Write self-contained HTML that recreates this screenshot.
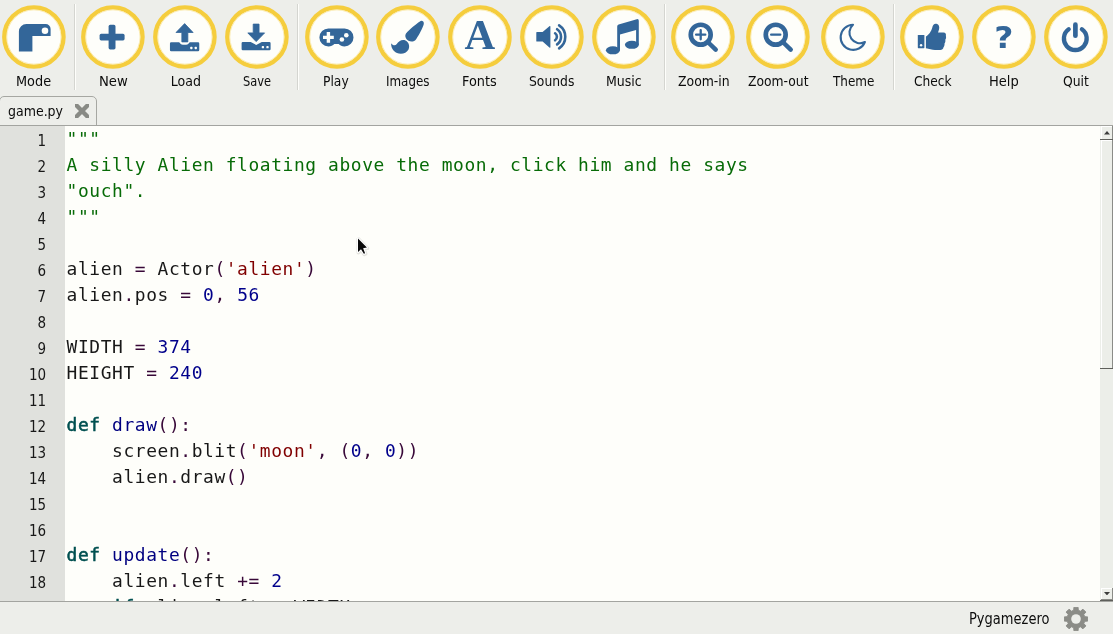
<!DOCTYPE html>
<html><head><meta charset="utf-8"><title>Mu</title>
<style>
html,body{margin:0;padding:0;}
body{width:1113px;height:634px;overflow:hidden;background:#edeeea;position:relative;font-family:"DejaVu Sans Condensed","DejaVu Sans","Liberation Sans",sans-serif;color:#0c0c0c;}
.ic{position:absolute;top:4.8px;width:64px;height:64px;overflow:visible;}
.l{position:absolute;top:72.4px;font-size:14px;line-height:18px;white-space:nowrap;transform-origin:0 0;}
.sep{position:absolute;top:4px;width:1px;height:86px;background:#d4d5d0;border-right:1px solid #fefefb;}
#w{position:absolute;left:0;top:0;width:1113px;height:634px;overflow:hidden;will-change:transform;}
#tab{position:absolute;left:-1px;top:96px;width:96px;height:32px;border:1px solid #a6a7a2;border-radius:5px 5px 0 0;background:#edeeea;}
#tabt{position:absolute;left:9.2px;top:102px;font-size:14px;line-height:18px;white-space:nowrap;transform-origin:0 0;}
#tabline{position:absolute;left:0;top:125px;width:1113px;height:1px;background:#a3a4a0;}
#ed{position:absolute;left:0;top:126px;width:1100px;height:475px;background:#fefefa;overflow:hidden;}
#mg{position:absolute;left:0;top:0;width:65px;height:475px;background:#e0e1dd;}
.ln{position:absolute;left:0;width:46.2px;text-align:right;font-size:15px;line-height:26px;height:26px;color:#181818;}
pre{position:absolute;left:66.6px;top:0;margin:0;font-family:"DejaVu Sans Mono","Liberation Mono",monospace;font-size:17.9px;letter-spacing:0.596px;line-height:26px;color:#181818;}
.k{color:#005050;-webkit-text-stroke:0.55px #005050;} .f{color:#000080;} .n{color:#00008b;} .s{color:#800000;} .d{color:#076b07;} .o{color:#380838;}
#sb{position:absolute;left:1100px;top:126px;width:13px;height:475px;background:#eceee9;}
#st{position:absolute;left:0;top:601px;width:1113px;height:33px;background:#edeeea;border-top:1px solid #a3a4a0;box-sizing:border-box;}
#stt{position:absolute;left:970px;top:609.6px;font-size:15px;line-height:18px;white-space:nowrap;transform-origin:0 0;}
</style></head><body><div id="w">
<div class="sep" style="left:74px"></div>
<div class="sep" style="left:297px"></div>
<div class="sep" style="left:664px"></div>
<div class="sep" style="left:893px"></div>
<svg class="ic" style="left:2.3px" viewBox="0 0 64 64"><circle cx="31.9" cy="32" r="29.65" fill="#fefefa" stroke="#f5cd3d" stroke-width="4.3"/><circle cx="31.9" cy="32" r="27.1" fill="none" stroke="#f9e38f" stroke-width="0.9" opacity="0.7"/><path d="M16.9 46.5V26.5a7.5 7.5 0 0 1 7.5-7.5H43.6a5 5 0 0 1 5 5V31H30.4V46.5Z" fill="#336699"/><circle cx="43" cy="25.8" r="3.3" fill="#fefefa"/></svg>
<span class="l" id="l-Mode" style="left:16.44px;transform:scaleX(1.0222)">Mode</span>
<svg class="ic" style="left:81.45px" viewBox="0 0 64 64"><circle cx="31.9" cy="32" r="29.65" fill="#fefefa" stroke="#f5cd3d" stroke-width="4.3"/><circle cx="31.9" cy="32" r="27.1" fill="none" stroke="#f9e38f" stroke-width="0.9" opacity="0.7"/><rect x="18.6" y="28.8" width="25" height="6.6" rx="1.6" fill="#336699"/><rect x="27.6" y="19.8" width="6.9" height="24.6" rx="1.6" fill="#336699"/></svg>
<span class="l" id="l-New" style="left:98.84px;transform:scaleX(1.0472)">New</span>
<svg class="ic" style="left:153.45px" viewBox="0 0 64 64"><circle cx="31.9" cy="32" r="29.65" fill="#fefefa" stroke="#f5cd3d" stroke-width="4.3"/><circle cx="31.9" cy="32" r="27.1" fill="none" stroke="#f9e38f" stroke-width="0.9" opacity="0.7"/><path d="M31.65 18.6L40.1 27.5H34.85V36.9H28.85V27.5H23Z" fill="#336699" stroke="#336699" stroke-width="0.8" stroke-linejoin="round"/><path d="M18.15 37.3H26.15L28 39.2Q31.45 40.4 34.9 39.2L36.75 37.3H45.05a1.2 1.2 0 0 1 1.2 1.2V45a1.2 1.2 0 0 1-1.2 1.2H18.15a1.2 1.2 0 0 1-1.2-1.2V38.5a1.2 1.2 0 0 1 1.2-1.2Z" fill="#336699"/><rect x="37.2" y="41.85" width="2.3" height="2.3" rx="0.7" fill="#fefefa"/><rect x="41.6" y="41.85" width="2.3" height="2.3" rx="0.7" fill="#fefefa"/></svg>
<span class="l" id="l-Load" style="left:170.75px;transform:scaleX(1)">Load</span>
<svg class="ic" style="left:225.45px" viewBox="0 0 64 64"><circle cx="31.9" cy="32" r="29.65" fill="#fefefa" stroke="#f5cd3d" stroke-width="4.3"/><circle cx="31.9" cy="32" r="27.1" fill="none" stroke="#f9e38f" stroke-width="0.9" opacity="0.7"/><path d="M28.2 19.1H34.05V27.9H39.6L31.2 36.6L22.8 27.9H28.2Z" fill="#336699" stroke="#336699" stroke-width="0.8" stroke-linejoin="round"/><path d="M17.8 37H25.7L31.2 39.9L36.8 37H44.4a1.2 1.2 0 0 1 1.2 1.2V44a1.2 1.2 0 0 1-1.2 1.2H17.8a1.2 1.2 0 0 1-1.2-1.2V38.2a1.2 1.2 0 0 1 1.2-1.2Z" fill="#336699"/><rect x="36.75" y="41.05" width="2.3" height="2.3" rx="0.7" fill="#fefefa"/><rect x="41.35" y="41.05" width="2.3" height="2.3" rx="0.7" fill="#fefefa"/></svg>
<span class="l" id="l-Save" style="left:243.31px;transform:scaleX(0.9073)">Save</span>
<svg class="ic" style="left:304.95px" viewBox="0 0 64 64"><circle cx="31.9" cy="32" r="29.65" fill="#fefefa" stroke="#f5cd3d" stroke-width="4.3"/><circle cx="31.9" cy="32" r="27.1" fill="none" stroke="#f9e38f" stroke-width="0.9" opacity="0.7"/><path d="M23.4 23.4H39.5a9 9 0 0 1 0 18c-2.6 0-4.3-1-5.8-2.5H29.3c-1.5 1.5-3.2 2.5-5.9 2.5a9 9 0 0 1 0-18Z" fill="#336699"/><path d="M23.4 27v10.8M18 32.4h10.8" stroke="#fefefa" stroke-width="3.4" fill="none"/><circle cx="41.3" cy="30.2" r="2.3" fill="#fefefa"/><circle cx="36.9" cy="34.5" r="2.3" fill="#fefefa"/></svg>
<span class="l" id="l-Play" style="left:323.05px;transform:scaleX(0.9773)">Play</span>
<svg class="ic" style="left:376.15px" viewBox="0 0 64 64"><circle cx="31.9" cy="32" r="29.65" fill="#fefefa" stroke="#f5cd3d" stroke-width="4.3"/><circle cx="31.9" cy="32" r="27.1" fill="none" stroke="#f9e38f" stroke-width="0.9" opacity="0.7"/><path d="M43.9 16.4C45.5 15 48.2 16.2 47.8 19C47 22.5 43 30 40.3 34C38.5 36.8 35 37.2 32.5 35.8C29.5 34 28.5 31 30 28.6C33 24.5 40 19 43.9 16.4Z" fill="#336699"/><path d="M15.1 38.3C17 40.8 19.3 41 20.8 39C22.5 36.3 26 34 29.5 35.5C33 37.2 34 41.5 32.5 44.5C30.5 48.5 25 49.8 21 48C17 46.2 15 42.5 15.1 38.3Z" fill="#336699"/></svg>
<span class="l" id="l-Images" style="left:386.07px;transform:scaleX(0.9449)">Images</span>
<svg class="ic" style="left:448.15px" viewBox="0 0 64 64"><circle cx="31.9" cy="32" r="29.65" fill="#fefefa" stroke="#f5cd3d" stroke-width="4.3"/><circle cx="31.9" cy="32" r="27.1" fill="none" stroke="#f9e38f" stroke-width="0.9" opacity="0.7"/><text x="31.85" y="44.1" text-anchor="middle" font-family="'Liberation Serif',serif" font-weight="bold" font-size="42.5" fill="#336699">A</text></svg>
<span class="l" id="l-Fonts" style="left:462.13px;transform:scaleX(1.0221)">Fonts</span>
<svg class="ic" style="left:520.15px" viewBox="0 0 64 64"><circle cx="31.9" cy="32" r="29.65" fill="#fefefa" stroke="#f5cd3d" stroke-width="4.3"/><circle cx="31.9" cy="32" r="27.1" fill="none" stroke="#f9e38f" stroke-width="0.9" opacity="0.7"/><path d="M16.3 27.6a0.6 0.6 0 0 1 .6-.6H22.6L29.4 21.2a0.6 0.6 0 0 1 1 .45V42.15a0.6 0.6 0 0 1-1 .45L22.6 36.6H16.9a0.6 0.6 0 0 1-.6-.6Z" fill="#336699"/><g fill="none" stroke="#336699" stroke-width="2.6" stroke-linecap="round"><path d="M35.1 28.3a4.3 4.3 0 0 1 0 7"/><path d="M37.1 24.2a9.3 9.3 0 0 1 0 15.2"/><path d="M39.1 20.3a13.8 13.8 0 0 1 0 23"/></g></svg>
<span class="l" id="l-Sounds" style="left:529.34px;transform:scaleX(0.9813)">Sounds</span>
<svg class="ic" style="left:592.15px" viewBox="0 0 64 64"><circle cx="31.9" cy="32" r="29.65" fill="#fefefa" stroke="#f5cd3d" stroke-width="4.3"/><circle cx="31.9" cy="32" r="27.1" fill="none" stroke="#f9e38f" stroke-width="0.9" opacity="0.7"/><path d="M25.2 21.4a2 2 0 0 1 1.4-1.9L44.8 14.2a1.6 1.6 0 0 1 2 1.5V39.8H44.1V24.9L28 29.6V45.3H25.2Z" fill="#336699"/><ellipse cx="20.9" cy="45.3" rx="7" ry="4" fill="#336699"/><ellipse cx="39.9" cy="39.8" rx="7" ry="4" fill="#336699"/></svg>
<span class="l" id="l-Music" style="left:606.36px;transform:scaleX(0.9979)">Music</span>
<svg class="ic" style="left:671.45px" viewBox="0 0 64 64"><circle cx="31.9" cy="32" r="29.65" fill="#fefefa" stroke="#f5cd3d" stroke-width="4.3"/><circle cx="31.9" cy="32" r="27.1" fill="none" stroke="#f9e38f" stroke-width="0.9" opacity="0.7"/><circle cx="29.7" cy="29.7" r="9.95" fill="none" stroke="#336699" stroke-width="4.7"/><path d="M37.3 37.5L44.7 44.7" stroke="#336699" stroke-width="4.5" stroke-linecap="round"/><path d="M25.1 29.7H34.3M29.7 25.1V34.3" stroke="#336699" stroke-width="2.3" stroke-linecap="round"/></svg>
<span class="l" id="l-Zoom-in" style="left:677.66px;transform:scaleX(0.988)">Zoom-in</span>
<svg class="ic" style="left:746.15px" viewBox="0 0 64 64"><circle cx="31.9" cy="32" r="29.65" fill="#fefefa" stroke="#f5cd3d" stroke-width="4.3"/><circle cx="31.9" cy="32" r="27.1" fill="none" stroke="#f9e38f" stroke-width="0.9" opacity="0.7"/><circle cx="29.7" cy="29.7" r="9.95" fill="none" stroke="#336699" stroke-width="4.7"/><path d="M37.3 37.5L44.7 44.7" stroke="#336699" stroke-width="4.5" stroke-linecap="round"/><path d="M25.1 29.7H34.3" stroke="#336699" stroke-width="2.3" stroke-linecap="round"/></svg>
<span class="l" id="l-Zoom-out" style="left:748.49px;transform:scaleX(0.9804)">Zoom-out</span>
<svg class="ic" style="left:821.45px" viewBox="0 0 64 64"><circle cx="31.9" cy="32" r="29.65" fill="#fefefa" stroke="#f5cd3d" stroke-width="4.3"/><circle cx="31.9" cy="32" r="27.1" fill="none" stroke="#f9e38f" stroke-width="0.9" opacity="0.7"/><path d="M32 19.7A12.6 12.6 0 1 0 43.9 37.05A10.6 10.6 0 0 1 32 19.7Z" fill="none" stroke="#336699" stroke-width="2.1" stroke-linejoin="round"/></svg>
<span class="l" id="l-Theme" style="left:833.1px;transform:scaleX(0.9518)">Theme</span>
<svg class="ic" style="left:900.15px" viewBox="0 0 64 64"><circle cx="31.9" cy="32" r="29.65" fill="#fefefa" stroke="#f5cd3d" stroke-width="4.3"/><circle cx="31.9" cy="32" r="27.1" fill="none" stroke="#f9e38f" stroke-width="0.9" opacity="0.7"/><rect x="17.8" y="30" width="6.6" height="13.2" rx="0.6" fill="#336699"/><circle cx="21.1" cy="40.3" r="1.2" fill="#fefefa"/><path d="M25.9 31.4C28.5 30.5 31.5 26 32.3 22.5C32.8 19.5 34.5 18.3 36.5 18.8C39 19.5 39.6 21.5 39.1 24C38.8 25.5 38.3 26.5 38 27.6H43.5C45.5 27.6 46.3 29.2 45.9 31C46.3 32.5 46 33.8 45.3 34.8C45.6 36.2 45.3 37.5 44.5 38.5C44.7 40 44.3 41.3 43.5 42.2C43.2 44 42 44.9 40.3 44.9H35C32 44.9 29 43.6 25.9 43.2Z" fill="#336699"/></svg>
<span class="l" id="l-Check" style="left:913.87px;transform:scaleX(0.97)">Check</span>
<svg class="ic" style="left:972.15px" viewBox="0 0 64 64"><circle cx="31.9" cy="32" r="29.65" fill="#fefefa" stroke="#f5cd3d" stroke-width="4.3"/><circle cx="31.9" cy="32" r="27.1" fill="none" stroke="#f9e38f" stroke-width="0.9" opacity="0.7"/><text transform="translate(31.7 0) scale(1.1 1)" x="0" y="43.2" text-anchor="middle" font-family="'DejaVu Sans','Liberation Sans',sans-serif" font-weight="bold" font-size="30" fill="#336699">?</text></svg>
<span class="l" id="l-Help" style="left:989.07px;transform:scaleX(1.0349)">Help</span>
<svg class="ic" style="left:1044.3px" viewBox="0 0 64 64"><circle cx="31.9" cy="32" r="29.65" fill="#fefefa" stroke="#f5cd3d" stroke-width="4.3"/><circle cx="31.9" cy="32" r="27.1" fill="none" stroke="#f9e38f" stroke-width="0.9" opacity="0.7"/><path d="M24.7 24.3A11.4 11.4 0 1 0 37.9 24.3" fill="none" stroke="#336699" stroke-width="4.3" stroke-linecap="round"/><path d="M31.4 19.7V30.7" stroke="#336699" stroke-width="4.7" stroke-linecap="round"/></svg>
<span class="l" id="l-Quit" style="left:1062.52px;transform:scaleX(0.9824)">Quit</span>
<div id="tab"></div><span id="tabt" style="left:8.28px;transform:scaleX(0.997)">game.py</span>
<svg style="position:absolute;left:74.9px;top:103.9px;width:14px;height:14px" viewBox="0 0 14 14"><path d="M-2 -2L16 16M16 -2L-2 16" stroke="#888a85" stroke-width="4.4"/></svg>
<div id="tabline"></div>
<div id="ed"><div id="mg"></div>
<div class="ln" style="top:1.5px">1</div><div class="ln" style="top:27.5px">2</div><div class="ln" style="top:53.5px">3</div><div class="ln" style="top:79.5px">4</div><div class="ln" style="top:105.5px">5</div><div class="ln" style="top:131.5px">6</div><div class="ln" style="top:157.5px">7</div><div class="ln" style="top:183.5px">8</div><div class="ln" style="top:209.5px">9</div><div class="ln" style="top:235.5px">10</div><div class="ln" style="top:261.5px">11</div><div class="ln" style="top:287.5px">12</div><div class="ln" style="top:313.5px">13</div><div class="ln" style="top:339.5px">14</div><div class="ln" style="top:365.5px">15</div><div class="ln" style="top:391.5px">16</div><div class="ln" style="top:417.5px">17</div><div class="ln" style="top:443.5px">18</div><div class="ln" style="top:469.5px">19</div>
<pre><span class="d">"""</span>
<span class="d">A silly Alien floating above the moon, click him and he says</span>
<span class="d">"ouch".</span>
<span class="d">"""</span>

alien <span class="o">=</span> Actor<span class="o">(</span><span class="s">'alien'</span><span class="o">)</span>
alien<span class="o">.</span>pos <span class="o">=</span> <span class="n">0</span><span class="o">,</span> <span class="n">56</span>

WIDTH <span class="o">=</span> <span class="n">374</span>
HEIGHT <span class="o">=</span> <span class="n">240</span>

<span class="k">def</span> <span class="f">draw</span><span class="o">():</span>
    screen<span class="o">.</span>blit<span class="o">(</span><span class="s">'moon'</span><span class="o">,</span> <span class="o">(</span><span class="n">0</span><span class="o">,</span> <span class="n">0</span><span class="o">))</span>
    alien<span class="o">.</span>draw<span class="o">()</span>


<span class="k">def</span> <span class="f">update</span><span class="o">():</span>
    alien<span class="o">.</span>left <span class="o">+=</span> <span class="n">2</span>
    <span class="k">if</span> alien<span class="o">.</span>left <span class="o">&gt;</span> WIDTH<span class="o">:</span>
</pre>
<svg style="position:absolute;left:354px;top:108px;width:20px;height:24px;overflow:visible" viewBox="0 0 20 24"><path d="M4 4.4V17.9L7 15.2L9.85 19.7L11.1 19.2L9.1 14.2L12.9 13.6Z" fill="none" stroke="#c9c9c4" stroke-opacity="0.5" stroke-width="3.8" stroke-linejoin="round" transform="translate(0.4 0.6)"/><path d="M4 4.4V17.9L7 15.2L9.85 19.7L11.1 19.2L9.1 14.2L12.9 13.6Z" fill="#0a0a0a" stroke="#ffffff" stroke-width="2.2" stroke-linejoin="round" paint-order="stroke"/></svg>
</div>
<div id="sb">
<div style="position:absolute;left:0;top:0;width:12px;height:13px;border-left:1px solid #f4f5f1;border-top:0;box-shadow:inset 1px 1px 0 #ffffff;"></div>
<div style="position:absolute;left:12px;top:0;width:1px;height:243px;background:#8b8c88"></div>
<div style="position:absolute;left:0;top:13px;width:13px;height:1px;background:#5e5f5b"></div>
<div style="position:absolute;left:1px;top:14px;width:11px;height:228px;box-shadow:inset 1px 1px 0 #ffffff;"></div>
<div style="position:absolute;left:0;top:242px;width:13px;height:1px;background:#5e5f5b"></div>
<div style="position:absolute;left:1px;top:462px;width:11px;height:11px;box-shadow:inset 1px 1px 0 #ffffff;"></div>
<div style="position:absolute;left:1px;top:473px;width:12px;height:1px;background:#8b8c88"></div>
<div style="position:absolute;left:12px;top:462px;width:1px;height:13px;background:#8b8c88"></div>
<div style="position:absolute;left:0;top:474px;width:13px;height:1px;background:#5e5f5b"></div>
<svg style="position:absolute;left:4px;top:5.4px;width:6px;height:3.4px" viewBox="0 0 6 3.4"><path d="M0 3.4L3 0L6 3.4Z" fill="#3c3c3c"/></svg>
<svg style="position:absolute;left:4px;top:466px;width:6px;height:3.4px" viewBox="0 0 6 3.4"><path d="M0 0L3 3.4L6 0Z" fill="#3c3c3c"/></svg>
</div>
<div id="st"></div><span id="stt" style="left:968.98px;transform:scaleX(0.9661)">Pygamezero</span>
<svg style="position:absolute;left:1064px;top:607px;width:24px;height:24px" viewBox="0 0 24 24"><path d="M9.69 3.3L9.97 0.17L14.03 0.17L14.31 3.3L16.51 4.21L18.93 2.2L21.8 5.07L19.79 7.49L20.7 9.69L23.83 9.97L23.83 14.03L20.7 14.31L19.79 16.51L21.8 18.93L18.93 21.8L16.51 19.79L14.31 20.7L14.03 23.83L9.97 23.83L9.69 20.7L7.49 19.79L5.07 21.8L2.2 18.93L4.21 16.51L3.3 14.31L0.17 14.03L0.17 9.97L3.3 9.69L4.21 7.49L2.2 5.07L5.07 2.2L7.49 4.21Z" fill="#8b8c87" stroke="#8b8c87" stroke-width="1" stroke-linejoin="round"/><circle cx="12" cy="12" r="4.8" fill="#edeeea"/></svg>
</div></body></html>
